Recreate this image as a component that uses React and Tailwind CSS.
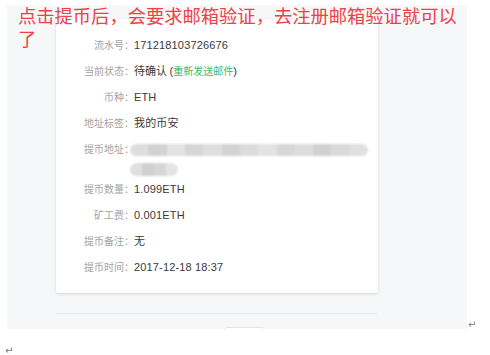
const rows = [
  { label: "流水号", value: "171218103726676" },
  { label: "当前状态", value: "status" },
  { label: "币种", value: "ETH" },
  { label: "地址标签", value: "我的币安" },
  { label: "提币地址", value: "address" },
  { label: "提币数量", value: "1.099ETH" },
  { label: "矿工费", value: "0.001ETH" },
  { label: "提币备注", value: "无" },
  { label: "提币时间", value: "2017-12-18 18:37" },
];

const line1 = ["#dedede", "#d2d2d2", "#e2e2e2", "#d6d6d6", "#dfdfdf", "#d3d3d3", "#dcdcdc", "#e3e3e3", "#d7d7d7", "#dddddd", "#d1d1d1", "#dadada", "#e0e0e0"];
const line2 = ["#dfdfdf", "#d0d0d0", "#d6d6d6", "#e4e4e4"];

function BlurredAddress() {
  return (
    <div className="-ml-[4px] flex flex-col gap-[7px] pt-[1px]">
      <div className="flex h-[12px] w-[238px] overflow-hidden rounded-full blur-[1.2px]">
        {line1.map((c, i) => (
          <div key={i} className="h-full flex-1" style={{ backgroundColor: c }} />
        ))}
      </div>
      <div className="flex h-[13px] w-[48px] overflow-hidden rounded-full blur-[1.2px]">
        {line2.map((c, i) => (
          <div key={i} className="h-full flex-1" style={{ backgroundColor: c }} />
        ))}
      </div>
    </div>
  );
}

function Value({ value }) {
  if (value === "status") {
    return (
      <span className="text-[11px] text-[#3a3a3a]">
        待确认 <span className="font-['Liberation_Sans',sans-serif]">(</span>
        <span className="text-[10px] text-[#46b95f]">重新发送邮件</span>
        <span className="font-['Liberation_Sans',sans-serif]">)</span>
      </span>
    );
  }
  if (value === "address") return <BlurredAddress />;
  return (
    <span className="font-['Liberation_Sans','Noto_Sans_CJK_SC',sans-serif] text-[11px] tracking-[0.15px] text-[#3a3a3a]">
      {value}
    </span>
  );
}

export default function App() {
  return (
    <div className="relative h-[355px] w-[490px] overflow-hidden bg-white font-['Noto_Sans_CJK_SC',sans-serif]">
      <div className="flex items-end pl-[7px] pt-[5px]">
        <div className="h-[324px] w-[460px] overflow-hidden bg-[#f6f7f9] pl-[49px] pt-[14px]">
          <div className="h-[274px] w-[322px] rounded-[2px] bg-white pl-[27px] pt-[13px] shadow-[0_1px_3px_rgba(0,0,0,0.14)]">
            {rows.map((r) => (
              <div
                key={r.label}
                className={`flex ${r.value === "address" ? "h-[40px] items-start pt-[7px]" : "h-[26px] items-center"}`}
              >
                <span className="w-[51px] shrink-0 text-right text-[10px] leading-[12px] text-[#a3a3a3]">
                  {r.label}：
                </span>
                <Value value={r.value} />
              </div>
            ))}
          </div>
          <div className="mt-[20px] h-px w-[322px] bg-[#eaecef]" />
          <div className="ml-[168px] mt-[13px] h-[10px] w-[41px] rounded-t-[3px] border border-[#e2e4e8] bg-white" />
        </div>
        <span className="mb-[-3px] ml-px font-['DejaVu_Sans',sans-serif] text-[10px] leading-[14px] text-[#7a7a7a]">↵</span>
      </div>
      <div className="pl-[5px] pt-[15px] font-['DejaVu_Sans',sans-serif] text-[10px] leading-[14px] text-[#7a7a7a]">↵</div>
      <div className="absolute left-[18px] top-[4px] whitespace-nowrap text-[18.3px] leading-[23px] text-[#ec4245]">
        点击提币后，会要求邮箱验证，去注册邮箱验证就可以
        <br />
        了
      </div>
    </div>
  );
}
